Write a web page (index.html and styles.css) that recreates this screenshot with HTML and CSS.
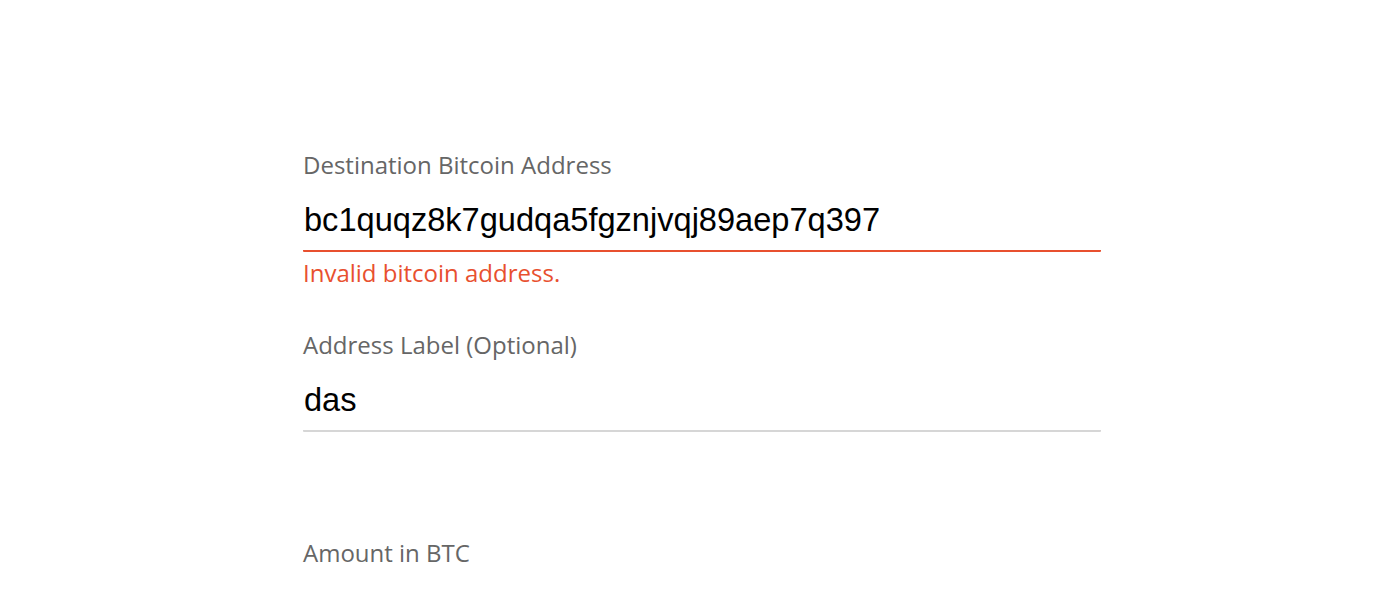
FILE: index.html
```html
<!DOCTYPE html>
<html>
<head>
<meta charset="utf-8">
<link rel="stylesheet" href="styles.css">
</head>
<body>
<div class="page">
  <form class="form">
    <div class="field">
      <label class="label">Destination Bitcoin Address</label>
      <div class="input input-error">bc1quqz8k7gudqa5fgznjvqj89aep7q397</div>
      <div class="error">Invalid bitcoin address.</div>
    </div>
    <div class="field">
      <label class="label">Address Label (Optional)</label>
      <div class="input">das</div>
    </div>
    <div class="field field-amount">
      <label class="label">Amount in BTC</label>
    </div>
  </form>
</div>
</body>
</html>
```
FILE: styles.css
```css
html, body {
  margin: 0;
  padding: 0;
  background: #fff;
}
.page {
  padding: 148px 0 0 303px;
  height: 592px;
  box-sizing: border-box;
  overflow: hidden;
}
.form {
  width: 798px;
  display: flex;
  flex-direction: column;
}
.label {
  display: block;
  font-family: "Open Sans", sans-serif;
  font-size: 24px;
  line-height: 32px;
  padding-top: 1px;
  color: #666;
}
.input {
  font-family: "Liberation Sans", Arial, sans-serif;
  font-size: 32.6px;
  line-height: 40px;
  color: #000;
  padding: 19px 0 10px 1px;
  border-bottom: 2px solid #d6d6d6;
  border-radius: 1px;
}
.input-error {
  border-bottom-color: #e8502f;
}
.error {
  font-family: "Open Sans", sans-serif;
  font-size: 24px;
  line-height: 32px;
  color: #e8502f;
  margin-top: 5px;
}
.field + .field {
  margin-top: 39px;
}
.field-amount {
  margin-top: 104px !important;
}
```
